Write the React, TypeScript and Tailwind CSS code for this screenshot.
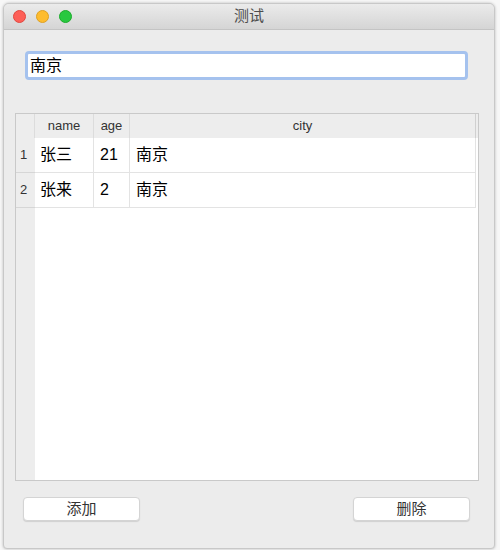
const font = "font-['Helvetica_Neue','Liberation_Sans','Noto_Sans_CJK_SC',sans-serif]";

const rows = [
  { id: 1, name: '张三', age: '21', city: '南京' },
  { id: 2, name: '张来', age: '2', city: '南京' },
];

const App = () => {
  return (
    <div className={`w-[500px] h-[550px] bg-[#f7f7f7] pt-[3px] pl-[3px] ${font}`}>
      <div className="w-[492px] h-[546px] flex flex-col rounded-t-[6px] rounded-b-[4px] overflow-hidden border border-[#c8c8c8] bg-[#ececec] shadow-[0_0_3px_rgba(0,0,0,0.25)]">
        {/* title bar */}
        <div className="relative h-[26px] shrink-0 flex items-center justify-center bg-gradient-to-b from-[#ebebeb] to-[#d5d5d5] border-b border-[#c4c4c4]">
          <div className="absolute left-[9px] top-[6px] flex gap-[10px]">
            <span className="w-[13px] h-[13px] rounded-full bg-[#fd5f57] border border-[#e1473f]" />
            <span className="w-[13px] h-[13px] rounded-full bg-[#febc2e] border border-[#dea123]" />
            <span className="w-[13px] h-[13px] rounded-full bg-[#28c840] border border-[#1dac2c]" />
          </div>
          <span className="text-[15px] text-[#4c4c4c]">测试</span>
        </div>

        {/* body */}
        <div className="flex-1 flex flex-col px-[11px]">
          <div className="mt-[21px] ml-[10px] w-[443px] h-[29px] rounded-[4px] border-[3px] border-[#a5c2ee] bg-white flex items-center px-[2px]">
            <span className="text-[16px] text-black leading-none">南京</span>
          </div>

          <div className="mt-[33px] w-[464px] h-[368px] border border-[#c9c9c9] bg-white flex flex-col">
            {/* header */}
            <div className="flex h-[24px] shrink-0 bg-[#ededed] text-[13px] text-[#333]">
              <div className="w-[19px] border-r border-[#dcdcdc]" />
              <div className="w-[59px] flex items-center justify-center border-r border-[#dcdcdc]">name</div>
              <div className="w-[36px] flex items-center justify-center border-r border-[#dcdcdc]">age</div>
              <div className="w-[346px] flex items-center justify-center border-r border-[#d0d0d0]">city</div>
            </div>

            {rows.map((r) => (
              <div key={r.id} className="flex h-[35px] shrink-0">
                <div className="w-[19px] bg-[#ededed] flex items-center pl-[4px] text-[13px] text-[#333] border-b border-[#d6d6d6]">
                  {r.id}
                </div>
                <div className="w-[59px] flex items-center pl-[5px] text-[16px] text-black border-r border-b border-[#e3e3e3]">
                  {r.name}
                </div>
                <div className="w-[36px] flex items-center pl-[6px] text-[16px] text-black border-r border-b border-[#e3e3e3]">
                  {r.age}
                </div>
                <div className="w-[346px] flex items-center pl-[6px] text-[16px] text-black border-r border-b border-[#e3e3e3]">
                  {r.city}
                </div>
              </div>
            ))}

            <div className="flex flex-1">
              <div className="w-[19px] bg-[#ededed]" />
              <div className="flex-1" />
            </div>
          </div>

          <div className="mt-[16px] flex justify-between pl-[8px] pr-[13px]">
            <button className="w-[117px] h-[24px] rounded-[4px] bg-white border border-[#d4d4d4] shadow-[0_1px_1px_rgba(0,0,0,0.12)] text-[15px] text-[#333] flex items-center justify-center">
              添加
            </button>
            <button className="w-[117px] h-[24px] rounded-[4px] bg-white border border-[#d4d4d4] shadow-[0_1px_1px_rgba(0,0,0,0.12)] text-[15px] text-[#333] flex items-center justify-center">
              删除
            </button>
          </div>
        </div>
      </div>
    </div>
  );
};

export default App;
